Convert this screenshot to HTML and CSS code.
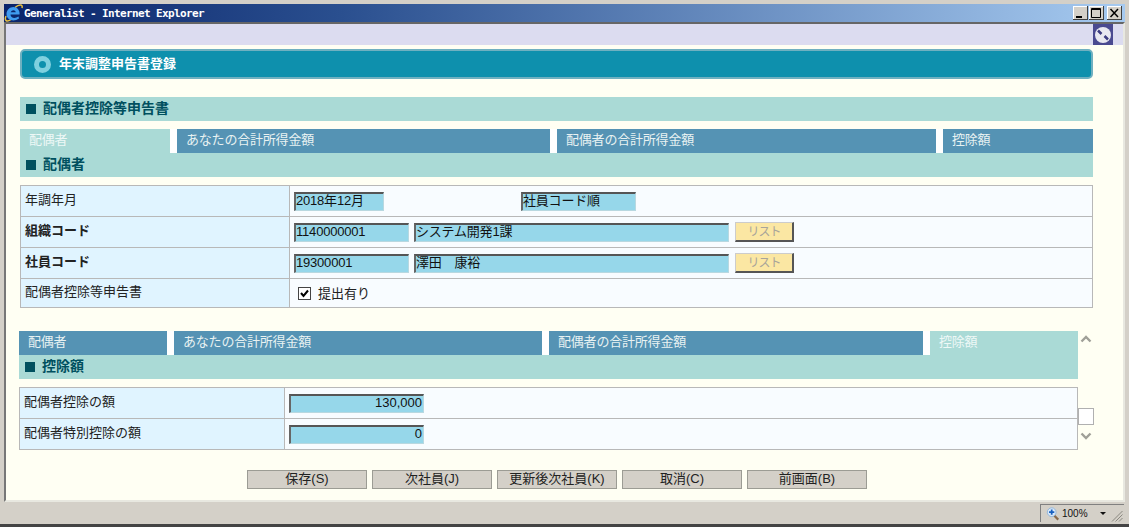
FILE: index.html
```html
<!DOCTYPE html>
<html lang="ja">
<head>
<meta charset="utf-8">
<title>Generalist - Internet Explorer</title>
<link rel="stylesheet" href="styles.css">
</head>
<body>
<div class="window">
  <header class="titlebar">
    <svg class="ie-icon" width="19" height="18" viewBox="0 0 19 18">
      <path d="M2 12C0 17 3 18.500 7 15.500M11 3.500C15 0 19 0 18 4" fill="none" stroke="#e8c040" stroke-width="1.500"/>
      <path d="M15.500 10.500H6.500C6.500 14 11 15 14.500 12.500L15 14.500C9.500 18.500 2.500 16 2.500 10C2.500 4.500 8 1.500 12 3.500C14.500 5 16 7.500 15.500 10.500ZM6.700 8.300H11.800C11.500 5.500 7.500 5.500 6.700 8.300Z" fill="#3f9cf0" fill-rule="evenodd"/>
    </svg>
    <span class="title-text">Generalist - Internet Explorer</span>
    <div class="win-buttons">
      <button class="win-btn"><svg width="15" height="14" viewBox="0 0 15 14"><rect x="3" y="10" width="6" height="2" fill="#000"/></svg></button>
      <button class="win-btn"><svg width="15" height="14" viewBox="0 0 15 14"><path d="M2.500 2.500H11.500V11.500H2.500ZM2.500 3.500H11.500" fill="none" stroke="#000"/></svg></button>
      <button class="win-btn win-close"><svg width="15" height="14" viewBox="0 0 15 14"><path d="M3.500 3L11 11M11 3L3.500 11" stroke="#000" stroke-width="1.500"/></svg></button>
    </div>
  </header>
  <div class="frame">
    <div class="toolbar">
      <div class="tool-icon">
        <svg width="20" height="20" viewBox="0 0 20 20">
          <circle cx="10" cy="10" r="8" fill="#e8e8f0"/>
          <path d="M5 5.500L8.500 9M11.500 11L15 14.500" stroke="#3c3c80" stroke-width="2.500"/>
        </svg>
      </div>
    </div>
    <main class="content">
      <div class="page-title">
        <span class="title-dot"></span>
        <span class="page-title-text">年末調整申告書登録</span>
      </div>
      <div class="section-bar section-main"><span class="sq"></span><span class="section-text">配偶者控除等申告書</span></div>

      <nav class="tabs">
        <span class="tab tab-active tab-a1">配偶者</span>
        <span class="tab tab-a2">あなたの合計所得金額</span>
        <span class="tab tab-a3">配偶者の合計所得金額</span>
        <span class="tab tab-a4">控除額</span>
      </nav>
      <div class="section-bar"><span class="sq"></span><span class="section-text">配偶者</span></div>

      <table class="form-table table-top">
        <tr class="row-a">
          <th class="label">年調年月</th>
          <td class="value">
            <div class="cell">
              <span class="field w90">2018年12月</span>
              <span class="field w115 gap-order">社員コード順</span>
            </div>
          </td>
        </tr>
        <tr class="row-a">
          <th class="label label-strong">組織コード</th>
          <td class="value">
            <div class="cell">
              <span class="field w115">1140000001</span>
              <span class="field w315">システム開発1課</span>
              <span class="list-btn">リスト</span>
            </div>
          </td>
        </tr>
        <tr class="row-a">
          <th class="label label-strong">社員コード</th>
          <td class="value">
            <div class="cell">
              <span class="field w115">19300001</span>
              <span class="field w315">澤田　康裕</span>
              <span class="list-btn">リスト</span>
            </div>
          </td>
        </tr>
        <tr class="row-b">
          <th class="label">配偶者控除等申告書</th>
          <td class="value">
            <div class="cell check-cell">
              <span class="check">
                <svg width="13" height="13" viewBox="0 0 13 13"><path d="M3 6L5.500 9L10 3.500" fill="none" stroke="#000" stroke-width="2"/></svg>
              </span>
              <span>提出有り</span>
            </div>
          </td>
        </tr>
      </table>

      <div class="lower">
        <div class="lower-main">
          <nav class="tabs tabs-lower">
            <span class="tab tab-b1">配偶者</span>
            <span class="tab tab-b2">あなたの合計所得金額</span>
            <span class="tab tab-b3">配偶者の合計所得金額</span>
            <span class="tab tab-active tab-b4">控除額</span>
          </nav>
          <div class="section-bar section-low"><span class="sq"></span><span class="section-text">控除額</span></div>
          <table class="form-table table-low">
            <tr class="row-a">
              <th class="label">配偶者控除の額</th>
              <td class="value"><div class="cell"><span class="field w135 num">130,000</span></div></td>
            </tr>
            <tr class="row-a">
              <th class="label">配偶者特別控除の額</th>
              <td class="value"><div class="cell"><span class="field w135 num">0</span></div></td>
            </tr>
          </table>
        </div>
        <div class="scrollbar">
          <svg class="chev" width="12" height="9" viewBox="0 0 12 9"><path d="M1.500 7.500L6 3L10.500 7.500" fill="none" stroke="#a0a098" stroke-width="2.400"/></svg>
          <span class="thumb"></span>
          <svg class="chev chev-down" width="12" height="9" viewBox="0 0 12 9"><path d="M1.500 1.500L6 6L10.500 1.500" fill="none" stroke="#a0a098" stroke-width="2.400"/></svg>
        </div>
      </div>

      <div class="actions">
        <button class="action">保存(S)</button>
        <button class="action">次社員(J)</button>
        <button class="action">更新後次社員(K)</button>
        <button class="action">取消(C)</button>
        <button class="action">前画面(B)</button>
      </div>
    </main>
  </div>
  <footer class="statusbar">
    <div class="zoom-pane">
      <svg width="14" height="15" viewBox="0 0 16 16">
        <path d="M9 10L14 15" stroke="#8a6a4a" stroke-width="2.500"/>
        <circle cx="6.500" cy="6.500" r="5" fill="#d8e8f8" stroke="#8ab0d8"/>
        <path d="M3.500 6.500H9.500M6.500 3.500V9.500" stroke="#1860c0" stroke-width="2"/>
      </svg>
      <span class="zoom-text">100%</span>
      <span class="zoom-arrow"></span>
      <svg class="grip" width="12" height="12" viewBox="0 0 12 12"><path d="M11.500 1L1 11.500M11.500 4.500L4.500 11.500M11.500 8L8 11.500" stroke="#8a8880"/></svg>
    </div>
  </footer>
</div>
</body>
</html>
```
FILE: styles.css
```css
* { box-sizing: border-box; }
html, body { margin: 0; padding: 0; }
body {
  width: 1129px;
  height: 527px;
  overflow: hidden;
  background: #d4d0c8;
  font: 13px/1 "Liberation Sans", "Noto Sans CJK JP", sans-serif;
  color: #222;
}
.window {
  height: 527px;
  display: flex;
  flex-direction: column;
  padding: 4px 0 3px 0;
  border-bottom: 3px solid #444;
  background: #d4d0c8;
}
.titlebar {
  height: 18px;
  flex: none;
  display: flex;
  align-items: center;
  background: linear-gradient(90deg, #0a246a 0%, #2a4f8f 30%, #a6caf0 100%);
  margin: 0 4px 0 4px;
  color: #fff;
}
.ie-icon { flex: none; margin-right: 1px; }
.title-text {
  font: 700 11px/1 "DejaVu Sans Mono", monospace;
  letter-spacing: -0.62px;
}
.win-buttons {
  margin-left: auto;
  display: flex;
  gap: 1px;
  padding-right: 3px;
}
.win-btn {
  width: 15px;
  height: 14px;
  padding: 0;
  background: #d4d0c8;
  border: 0;
  box-shadow: inset -1px -1px 0 #404040, inset 1px 1px 0 #fff;
  display: block;
}
.win-btn svg { display: block; }
.win-close { margin-left: 2px; }
.frame {
  flex: none;
  height: 480px;
  margin: 0 4px;
  border-top: 2px solid #666;
  border-left: 2px solid #777;
  border-right: 2px solid #e8e8e0;
  border-bottom: 2px solid #e8e8e0;
  background: #fffff3;
  display: flex;
  flex-direction: column;
}
.toolbar {
  height: 21px;
  flex: none;
  background: #dcdcf0;
  display: flex;
  justify-content: flex-end;
  padding-right: 10px;
}
.tool-icon {
  width: 20px;
  height: 21px;
  background: #4a4a90;
  padding-top: 1px;
}
.tool-icon svg { display: block; }
.content {
  flex: 1;
  padding: 4px 29px 0 14px;
  display: flex;
  flex-direction: column;
  background: #fffff3;
}
.page-title {
  height: 30px;
  flex: none;
  width: 1073px;
  background: #0e90ad;
  border: 2px solid #6fb0c0;
  border-radius: 5px;
  color: #fff;
  font-weight: 700;
  font-size: 13px;
  display: flex;
  align-items: center;
  padding-left: 12px;
  gap: 8px;
}
.page-title-text { margin-bottom: 2px; }
.title-dot {
  width: 17px;
  height: 17px;
  border-radius: 50%;
  border: 5px solid #7fd0df;
  background: #0e90ad;
  flex: none;
}
.section-bar {
  width: 1073px;
  height: 24px;
  flex: none;
  background: #aadad6;
  color: #00505f;
  font-weight: 700;
  font-size: 14px;
  display: flex;
  align-items: center;
  padding-left: 6px;
}
.section-text { margin-bottom: 2px; }
.section-main { margin-top: 18px; }
.section-low { width: 1059px; }
.sq {
  width: 10px;
  height: 10px;
  background: #00505f;
  margin-right: 7px;
  flex: none;
}
.tabs {
  display: flex;
  height: 24px;
  flex: none;
  width: 1073px;
  margin-top: 8px;
  background: #fff;
  justify-content: space-between;
}
.tab {
  background: #5593b4;
  color: #e8f2f2;
  font-size: 13px;
  letter-spacing: -0.2px;
  display: flex;
  align-items: center;
  padding-left: 9px;
  padding-bottom: 3px;
}
.tab-active { background: #aadad6; color: #eef8f6; }
.tab-a1 { width: 150px; }
.tab-a2 { width: 373px; }
.tab-a3 { width: 379px; }
.tab-a4 { width: 150px; }
.tabs-lower { width: 1059px; margin-top: 0; }
.tab-b1 { width: 148px; }
.tab-b2 { width: 368px; }
.tab-b3 { width: 374px; }
.tab-b4 { width: 148px; }
.form-table {
  border-collapse: collapse;
  table-layout: fixed;
  flex: none;
  margin-top: 8px;
}
.table-top { width: 1073px; }
.table-low { width: 1059px; margin-top: 8px; }
.form-table th, .form-table td {
  border: 1px solid #b8b8b8;
  padding: 0;
}
.row-a { height: 31px; }
.row-b { height: 29px; }
.form-table .label {
  background: #e0f4ff;
  font-weight: 400;
  text-align: left;
  padding: 0 0 4px 4px;
  font-size: 13px;
  color: #222;
}
.table-top .label { width: 269px; }
.table-low .label { width: 265px; }
.form-table .label-strong { font-weight: 700; }
.value { background: #f8fcff; }
.cell {
  display: flex;
  align-items: center;
  gap: 5px;
  padding-left: 4px;
}
.field {
  height: 19px;
  background: #96d7ea;
  border-style: solid;
  border-width: 2px 1px 1px 2px;
  border-color: #555 #b8d8e0 #b8d8e0 #666;
  font-size: 13px;
  line-height: 14px;
  letter-spacing: -0.2px;
  padding-left: 0;
  color: #111;
  white-space: nowrap;
  overflow: hidden;
  flex: none;
}
.w90 { width: 90px; }
.w115 { width: 115px; }
.w135 { width: 135px; }
.w315 { width: 315px; }
.gap-order { margin-left: 132px; }
.num { text-align: right; padding-right: 1px; letter-spacing: 0; }
.list-btn {
  width: 59px;
  height: 20px;
  margin-left: 1px;
  background: #fbe7a3;
  border-style: solid;
  border-width: 1px 2px 2px 1px;
  border-color: #ccc #555 #555 #ccc;
  color: #a8a49a;
  font-size: 12px;
  letter-spacing: -1px;
  display: flex;
  align-items: center;
  justify-content: center;
  flex: none;
}
.check-cell { padding-left: 8px; gap: 7px; }
.check {
  width: 13px;
  height: 13px;
  border: 1px solid #444;
  background: #fff;
  flex: none;
  position: relative;
}
.check svg { display: block; margin: -1px; }
.lower {
  display: flex;
  margin-top: 23px;
  margin-left: -1px;
  flex: none;
}
.lower-main { width: 1059px; flex: none; }
.scrollbar {
  width: 16px;
  flex: none;
  display: flex;
  flex-direction: column;
  align-items: center;
  padding-top: 3px;
}
.chev { display: block; flex: none; }
.thumb {
  width: 16px;
  height: 17px;
  margin-top: 65px;
  background: #fff;
  border: 1px solid #b0b0b0;
  flex: none;
}
.chev-down { margin-top: 7px; }
.actions {
  display: flex;
  justify-content: flex-start;
  gap: 5px;
  margin-top: 20px;
  margin-left: 227px;
  flex: none;
}
.action {
  width: 120px;
  height: 19px;
  padding: 0 0 3px;
  background: #d4d0c8;
  border: 1px solid #9c9c94;
  font: 13px/1 "Liberation Sans", "Noto Sans CJK JP", sans-serif;
  color: #222;
}
.statusbar {
  flex: none;
  height: 22px;
  margin: 0 5px 0 4px;
  display: flex;
  justify-content: flex-end;
  align-items: center;
}
.zoom-pane {
  width: 84px;
  height: 18px;
  border-top: 1px solid #808080;
  border-left: 1px solid #808080;
  display: flex;
  align-items: center;
  padding-left: 5px;
  gap: 2px;
  position: relative;
}
.zoom-text { font: 10px/1 "Liberation Sans", sans-serif; color: #111; }
.zoom-arrow {
  width: 0;
  height: 0;
  border-left: 3px solid transparent;
  border-right: 3px solid transparent;
  border-top: 3px solid #111;
  margin-left: 10px;
}
.grip { position: absolute; right: 1px; bottom: 0; }
```
